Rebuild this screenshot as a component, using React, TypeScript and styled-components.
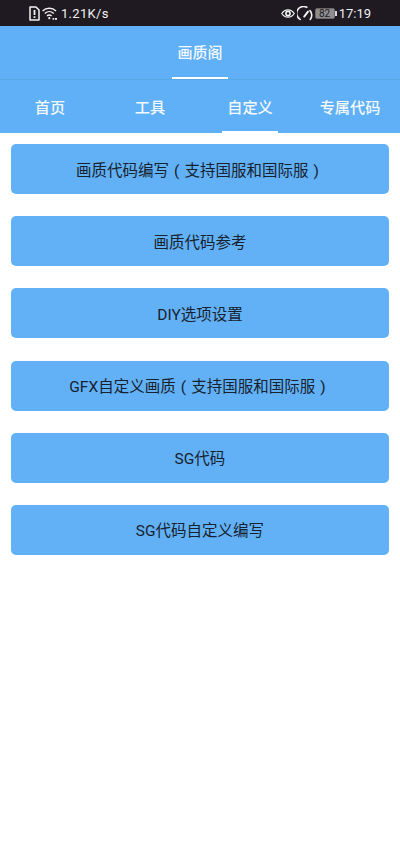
import React from "react";
import styled, { createGlobalStyle } from "styled-components";

const GlobalStyle = createGlobalStyle`
  html, body {
    margin: 0;
    padding: 0;
    background: #fff;
  }
  body {
    font-family: Roboto, "Noto Sans CJK SC", sans-serif;
  }
`;

const tabs = ["首页", "工具", "自定义", "专属代码"];
const activeTab = "自定义";

const items = [
  { label: "画质代码编写", note: "支持国服和国际服" },
  { label: "画质代码参考" },
  { label: "DIY选项设置" },
  { label: "GFX自定义画质", note: "支持国服和国际服" },
  { label: "SG代码" },
  { label: "SG代码自定义编写" },
];

const SimIcon = () => (
  <svg width="11" height="15" viewBox="0 0 11 15" fill="none">
    <path d="M1 1h6l3 3v10H1z" stroke="#f2f2f2" strokeWidth="1.5" strokeLinejoin="round" />
    <path d="M5.5 4v5M5.5 10.2v1.8" stroke="#f2f2f2" strokeWidth="1.8" />
  </svg>
);

const WifiIcon = () => (
  <svg width="16" height="13" viewBox="0 0 16 13" fill="none" stroke="#f2f2f2">
    <path d="M.6 3.9C4.2.4 10.4.4 14 3.9" strokeWidth="1.4" />
    <path d="M2.8 6.4c2.6-2.4 6.4-2.4 9 0" strokeWidth="1.4" />
    <path d="M5 8.9c1.4-1.2 3.2-1.2 4.6 0" strokeWidth="1.4" />
    <circle cx="7.3" cy="11.2" r="1.1" fill="#f2f2f2" stroke="none" />
    <path d="M10.6 11.8h1.6M13 11.8h2" strokeWidth="1.7" />
  </svg>
);

const EyeIcon = () => (
  <svg width="14" height="11" viewBox="0 0 14 11" fill="none" stroke="#f2f2f2">
    <path d="M.8 5.5C3.8.6 10.2.6 13.2 5.5 10.2 10.4 3.8 10.4.8 5.5z" strokeWidth="1.2" />
    <circle cx="7" cy="5.5" r="2.1" strokeWidth="1.6" />
  </svg>
);

const GaugeIcon = () => (
  <svg width="16" height="15" viewBox="0 0 16 15" fill="none" stroke="#f2f2f2" strokeLinecap="round">
    <path d="M3.2 13.4A6.6 6.6 0 0 1 9.8 1.3" strokeWidth="1.6" />
    <path d="M13 4.6A6.6 6.6 0 0 1 13.2 13.4" strokeWidth="1.6" />
    <path d="M7.2 10.6l3.8-5" strokeWidth="1.9" />
  </svg>
);

const Page = styled.div`
  width: 400px;
  height: 866px;
  display: flex;
  flex-direction: column;
  background: #fff;
  overflow: hidden;
`;

const StatusBar = styled.div`
  height: 26px;
  display: flex;
  align-items: center;
  justify-content: space-between;
  padding: 0 29px;
  background: #1f1a21;
  color: #efefef;
  font-size: 13px;
  flex-shrink: 0;
`;

const StatusGroup = styled.div`
  display: flex;
  align-items: center;
  gap: 2px;
`;

const Speed = styled.span`
  margin-left: 1px;
  letter-spacing: 0.3px;
`;

const Battery = styled.div`
  width: 20px;
  height: 11px;
  margin: 0 2px 0 0;
  background: #8f8c90;
  border: 1px solid #6b686c;
  box-sizing: border-box;
  border-radius: 2px;
  color: #1f1a21;
  font-size: 10px;
  line-height: 9px;
  text-align: center;
  position: relative;

  &::after {
    content: "";
    position: absolute;
    right: -3px;
    top: 2px;
    width: 1.5px;
    height: 5px;
    background: #d8d8d8;
  }
`;

const Clock = styled.span`
  font-size: 13px;
`;

const TitleBar = styled.div`
  height: 54px;
  display: flex;
  justify-content: center;
  background: #5fb0f6;
  border-bottom: 1px solid #58a5e6;
  box-sizing: border-box;
  flex-shrink: 0;
`;

const TitleTab = styled.div`
  width: 56px;
  display: flex;
  align-items: center;
  justify-content: center;
  color: #f4f9fe;
  font-size: 15px;
  font-weight: 500;
  border-bottom: 2px solid #fff;
  box-sizing: border-box;
`;

const TabBar = styled.div`
  height: 53px;
  display: grid;
  grid-template-columns: repeat(4, 100px);
  background: #5fb0f6;
  flex-shrink: 0;
`;

const Tab = styled.div<{ $active: boolean }>`
  display: flex;
  align-items: center;
  justify-content: center;
  padding-bottom: 2px;
  color: #f4f9fe;
  font-size: 15.2px;
  font-weight: 500;
  position: relative;

  ${({ $active }) =>
    $active &&
    `
    &::after {
      content: "";
      position: absolute;
      left: 22px;
      bottom: 0;
      width: 56px;
      height: 2px;
      background: #fff;
    }
  `}
`;

const List = styled.div`
  display: flex;
  flex-direction: column;
  gap: 22.2px;
  padding: 11px 11px 0;
`;

const Item = styled.div`
  height: 50px;
  display: flex;
  align-items: center;
  justify-content: center;
  padding-bottom: 1px;
  box-sizing: border-box;
  background: #62b1f6;
  border-radius: 5px;
  color: #17222e;
  font-size: 15.5px;
`;

const Paren = styled.span`
  display: inline-block;
  width: 1em;
  text-align: center;
  font-family: Roboto, sans-serif;
`;

export default function App() {
  return (
    <Page>
      <GlobalStyle />
      <StatusBar>
        <StatusGroup>
          <SimIcon />
          <WifiIcon />
          <Speed>1.21K/s</Speed>
        </StatusGroup>
        <StatusGroup>
          <EyeIcon />
          <GaugeIcon />
          <Battery>82</Battery>
          <Clock>17:19</Clock>
        </StatusGroup>
      </StatusBar>
      <TitleBar>
        <TitleTab>画质阁</TitleTab>
      </TitleBar>
      <TabBar>
        {tabs.map((tab) => (
          <Tab key={tab} $active={tab === activeTab}>
            {tab}
          </Tab>
        ))}
      </TabBar>
      <List>
        {items.map((item) => (
          <Item key={item.label}>
            <span>
              {item.label}
              {item.note && (
                <>
                  <Paren>(</Paren>
                  {item.note}
                  <Paren>)</Paren>
                </>
              )}
            </span>
          </Item>
        ))}
      </List>
    </Page>
  );
}
